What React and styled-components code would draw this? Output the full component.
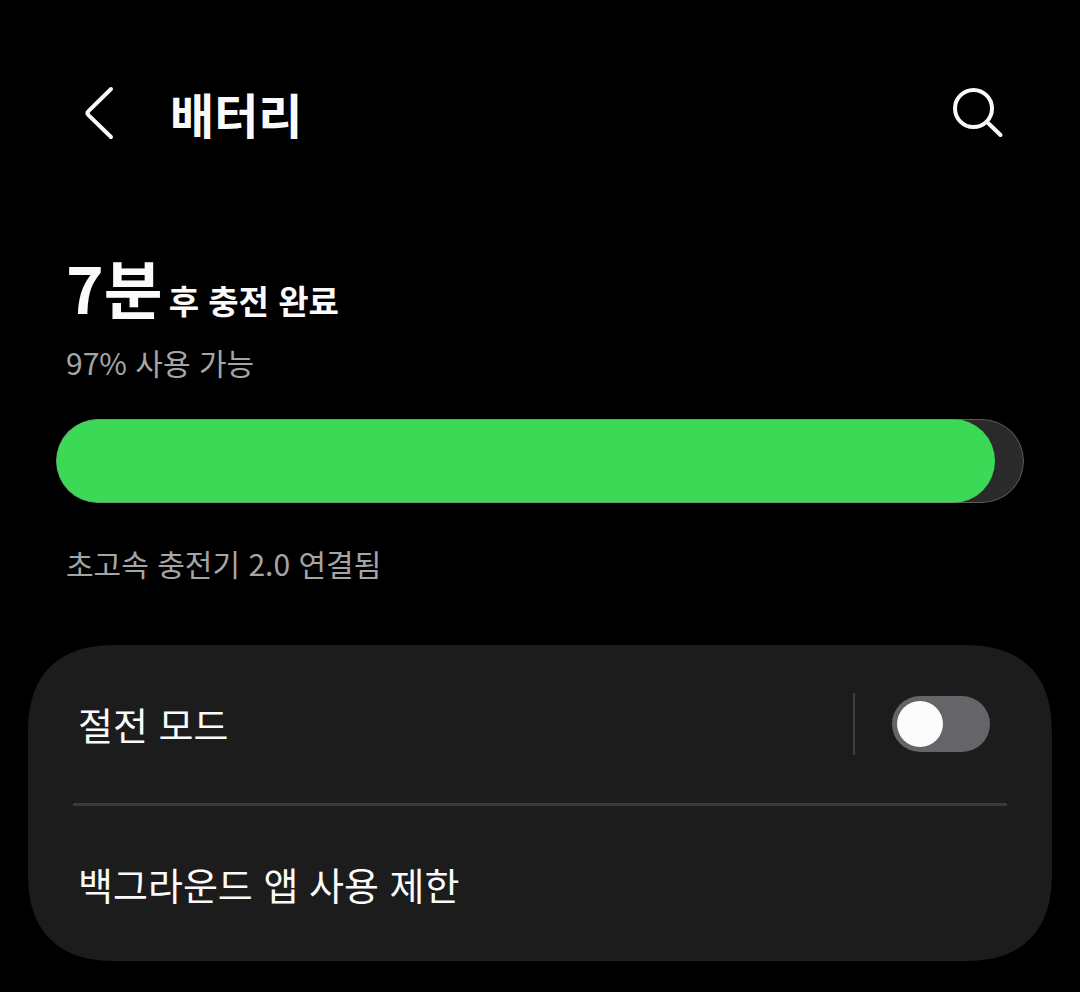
import React, { useState } from 'react';
import styled, { createGlobalStyle } from 'styled-components';

const GlobalStyle = createGlobalStyle`
  * {
    box-sizing: border-box;
  }
  body {
    margin: 0;
    background-color: #000;
    color: #fafafa;
    font-family: 'Noto Sans CJK KR', sans-serif;
  }
`;

const Page = styled.main`
  padding: 64px 28px 31px;
`;

// Styles for the top bar
const TopBar = styled.header`
  display: flex;
  align-items: center;
  height: 98px;
  padding: 0 44px;
`;

const IconButton = styled.button`
  display: flex;
  padding: 0;
  border: none;
  background: none;
  color: inherit;
  cursor: pointer;
`;

const Title = styled.h1`
  flex: 1;
  margin: 0 0 0 42px;
  font-size: 48px;
  font-weight: 700;
  line-height: 64px;
`;

// Styles for the charging status
const Status = styled.section`
  padding: 80px 28px 0;
`;

const TimeLeft = styled.h2`
  margin: 0;
  padding: 0 10px;
  font-size: 64px;
  font-weight: 700;
  line-height: 88px;
`;

const TimeLabel = styled.span`
  margin-left: 6px;
  font-size: 33px;
  line-height: 40px;
`;

const Note = styled.p`
  margin: 12px 0 0;
  padding: 0 10px;
  color: #a5a5a5;
  font-size: 30px;
  line-height: 40px;
`;

const BatteryBar = styled.div`
  position: relative;
  height: 84px;
  margin: 37px 0 40px;
  border-radius: 42px;
  background-color: #2a2a2a;
  overflow: hidden;
  &::after {
    content: '';
    position: absolute;
    inset: 0;
    border: 1px solid rgba(128, 128, 128, 0.6);
    border-radius: 42px;
  }
`;

const BatteryFill = styled.div`
  height: 100%;
  border-radius: 42px;
  background-color: #3cd957;
`;

// Styles for the settings card
const Card = styled.section`
  margin-top: 62px;
  padding: 0 45px;
  border-radius: 76px;
  background-color: #1c1c1c;
  @supports (corner-shape: superellipse(1.3)) {
    border-radius: 90px;
    corner-shape: superellipse(1.3);
  }
`;

const Row = styled.div`
  display: flex;
  align-items: center;
  min-height: ${(props) => (props.$divided ? '161px' : '155px')};
  padding: 0 17px 0 5px;
  border-bottom: ${(props) => (props.$divided ? '3px solid #3a3a3a' : 'none')};
`;

const RowLabel = styled.label`
  flex: 1;
  font-size: 38px;
  line-height: 56px;
`;

const RowLink = styled.a`
  flex: 1;
  color: inherit;
  font-size: 38px;
  line-height: 56px;
  text-decoration: none;
`;

const Separator = styled.span`
  width: 2px;
  height: 62px;
  margin-right: 37px;
  background-color: #3e3e3e;
`;

const Switch = styled.input`
  appearance: none;
  display: flex;
  width: 98px;
  height: 56px;
  margin: 0;
  padding: 5px;
  border-radius: 28px;
  background-color: #656468;
  cursor: pointer;
  &::before {
    content: '';
    width: 46px;
    height: 46px;
    border-radius: 50%;
    background-color: #fcfcfc;
  }
  &:checked {
    justify-content: flex-end;
    background-color: #3cd957;
  }
`;

const BackIcon = () => (
  <svg width="56" height="56" viewBox="0 0 56 56" fill="none" stroke="currentColor" strokeWidth="4" strokeLinecap="round" strokeLinejoin="round" aria-hidden="true">
    <path d="M39 4L16.5 26.2Q14.5 28.2 16.5 30.2L39 52" />
  </svg>
);

const SearchIcon = () => (
  <svg width="56" height="56" viewBox="0 0 56 56" fill="none" stroke="currentColor" strokeWidth="4" strokeLinecap="round" aria-hidden="true">
    <circle cx="21.5" cy="23.5" r="18.5" />
    <path d="M35 37L48.5 50" />
  </svg>
);

const Battery = ({ level }) => (
  <BatteryBar role="progressbar" aria-label="배터리" aria-valuenow={level} aria-valuemin={0} aria-valuemax={100}>
    <BatteryFill style={{ width: `${level}%` }} />
  </BatteryBar>
);

const App = () => {
  const [powerSaving, setPowerSaving] = useState(false);
  const level = 97;

  return (
    <>
      <GlobalStyle />
      <Page lang="ko">
        <TopBar>
          <IconButton type="button" aria-label="뒤로">
            <BackIcon />
          </IconButton>
          <Title>배터리</Title>
          <IconButton type="button" aria-label="검색">
            <SearchIcon />
          </IconButton>
        </TopBar>
        <Status>
          <TimeLeft>
            7분<TimeLabel>후 충전 완료</TimeLabel>
          </TimeLeft>
          <Note>{level}% 사용 가능</Note>
          <Battery level={level} />
          <Note>초고속 충전기 2.0 연결됨</Note>
        </Status>
        <Card>
          <Row $divided>
            <RowLabel htmlFor="power-saving">절전 모드</RowLabel>
            <Separator />
            <Switch
              id="power-saving"
              type="checkbox"
              role="switch"
              checked={powerSaving}
              onChange={(e) => setPowerSaving(e.target.checked)}
            />
          </Row>
          <Row>
            <RowLink href="#background-usage">백그라운드 앱 사용 제한</RowLink>
          </Row>
        </Card>
      </Page>
    </>
  );
};

export default App;
